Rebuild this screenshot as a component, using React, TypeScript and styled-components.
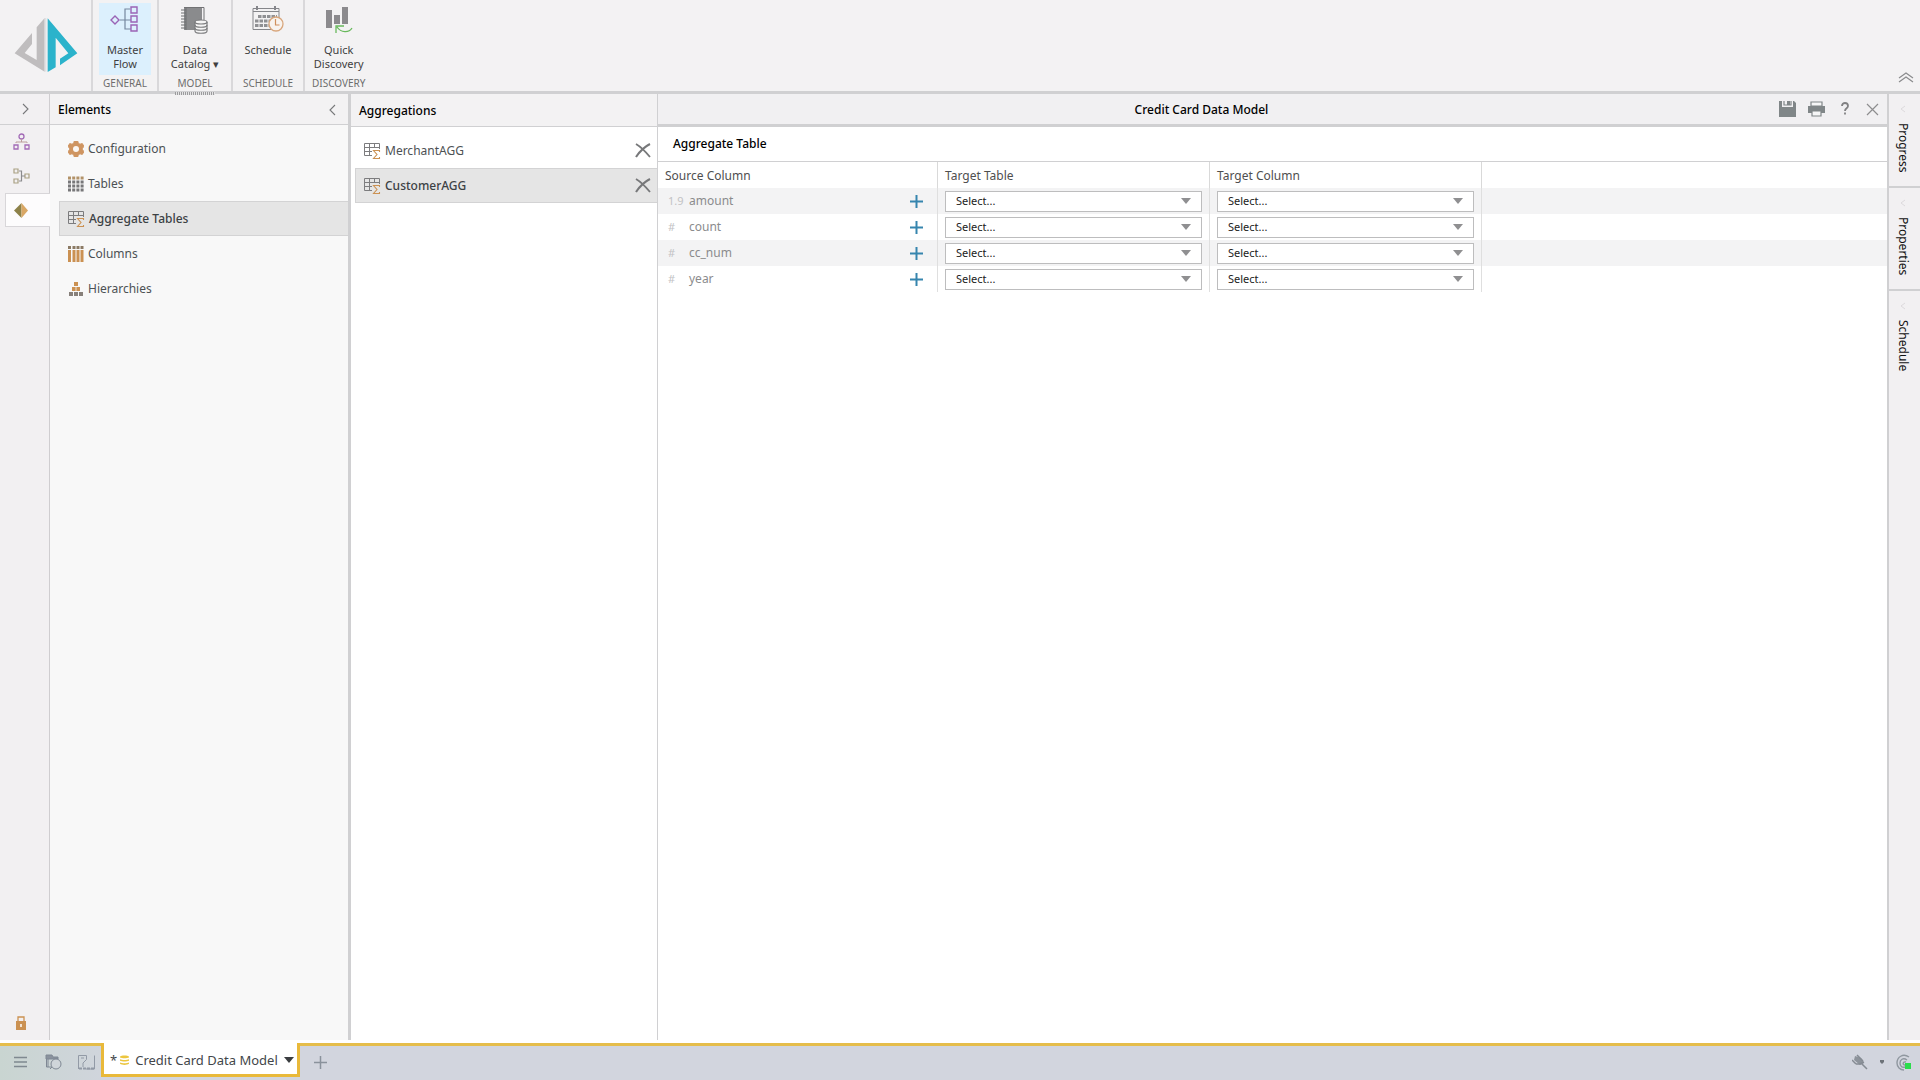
import React from "react";
import styled, { createGlobalStyle, css } from "styled-components";

const line = "#d0d0d2";
const chrome = "#f3f2f3";
const orange = "#cb9152";

const GlobalStyle = createGlobalStyle`
  *, *::before, *::after { box-sizing: border-box; }
  body { margin: 0; background: #fff; color: #222; font: 12px/16px "Noto Sans", "Open Sans", sans-serif; }
  button, select { font: inherit; color: inherit; border: 0; padding: 0; background: none; border-radius: 0; cursor: pointer; }
  h1, h2, ul { margin: 0; padding: 0; font-size: 12px; font-weight: 500; list-style: none; }
  svg { display: block; flex: none; }
`;

const Page = styled.div`
  min-height: 100vh;
  display: grid;
  grid-template-rows: auto 1fr auto;
`;

/* Ribbon */
const Ribbon = styled.header`
  display: flex;
  height: 94px;
  background: ${chrome};
  border-bottom: 3px solid ${line};
`;
const LogoBox = styled.div`
  width: 91px;
  padding: 17px 0 0 14px;
`;
const Group = styled.section<{ $pad: number }>`
  position: relative;
  display: flex;
  flex-direction: column;
  align-items: center;
  justify-content: space-between;
  border-left: 2px solid #d9d8da;
  padding: 3px ${(p) => p.$pad}px 0;
`;
const Grip = styled.span`
  position: absolute;
  left: calc(50% - 20px);
  bottom: -4px;
  width: 40px;
  height: 3px;
  background: repeating-linear-gradient(90deg, #9b9b9d 0 1px, #e4e4e5 1px 2px);
`;
const RibbonButton = styled.button<{ $active?: boolean }>`
  display: flex;
  flex-direction: column;
  align-items: center;
  min-width: 52px;
  height: 72px;
  font-size: 11px;
  line-height: 14px;
  color: #3f3f3f;
  gap: 9px;
  padding-top: 3px;
  background: ${(p) => (p.$active ? "#dcf0fd" : "transparent")};
`;
const GroupLabel = styled.span`
  font-size: 10px;
  line-height: 16px;
  color: #6d6d6d;
  text-transform: uppercase;
`;
const Spacer = styled.div`
  flex: 1;
`;
const RibbonToggle = styled.button`
  align-self: flex-end;
  padding: 0 6px 8px;
`;

/* Work area */
const Work = styled.main`
  display: grid;
  grid-template-columns: 50px 301px 307px minmax(0, 1fr) 31px;
  padding-bottom: 3px;
`;
const Rail = styled.nav`
  display: flex;
  flex-direction: column;
  background: #f2f0f2;
  border-right: 1px solid #cfcdd0;
`;
const RailToggle = styled.button`
  height: 31px;
  display: flex;
  align-items: center;
  justify-content: center;
  border-bottom: 1px solid ${line};
`;
const RailTab = styled.button<{ $active?: boolean }>`
  height: 34px;
  margin: 0 -1px 0 5px;
  display: flex;
  align-items: center;
  padding-left: 8px;
  ${(p) =>
    p.$active &&
    css`
      background: #fdfcfd;
      border: 1px solid #d8d6d9;
      border-right: 0;
    `}
`;
const RailFoot = styled.button`
  margin-top: auto;
  padding: 0 0 10px 15px;
`;
const Panel = styled.section<{ $tint?: boolean }>`
  background: ${(p) => (p.$tint ? "#f8f8f8" : "#fff")};
  border-right: ${(p) => (p.$tint ? "3px" : "1px")} solid ${line};
`;
const PanelHead = styled.div<{ $tall?: boolean }>`
  display: flex;
  align-items: center;
  justify-content: space-between;
  height: ${(p) => (p.$tall ? "33px" : "31px")};
  padding: 2px 11px 0 8px;
  background: ${chrome};
  border-bottom: 1px solid ${line};
  color: #000;
`;
const List = styled.ul<{ $inset: number }>`
  && {
    padding: 6px 0 0 ${(p) => p.$inset}px;
  }
`;
const Row = styled.li<{ $active?: boolean }>`
  display: flex;
  align-items: center;
  height: 35px;
  padding-right: 6px;
  border: 1px solid transparent;
  border-right: 0;
  ${(p) =>
    p.$active &&
    css`
      background: #e5e5e5;
      border-color: #d3d3d4;
    `}
`;
const RowButton = styled.button<{ $active?: boolean }>`
  flex: 1;
  height: 100%;
  display: flex;
  align-items: center;
  gap: 4px;
  padding-left: 8px;
  color: ${(p) => (p.$active ? "#3c4144" : "#4c5154")};
  font-weight: ${(p) => (p.$active ? 500 : 400)};
`;

/* Editor */
const Editor = styled.section`
  border-right: 2px solid ${line};
`;
const EditorHead = styled.div`
  display: flex;
  align-items: center;
  height: 33px;
  background: #f1f0f2;
  border-bottom: 3px solid ${line};
  color: #000;
`;
const Tools = styled.div`
  width: 142px;
  display: flex;
  align-items: center;
  justify-content: flex-end;
  gap: 12px;
  padding-right: 8px;
`;
const HeadTitle = styled.h1`
  flex: 1;
  padding-top: 2px;
  text-align: center;
`;
const Subtitle = styled.h2`
  && {
    padding: 9px 15px;
    border-bottom: 1px solid ${line};
    color: #000;
  }
`;
const Grid = styled.table`
  width: 100%;
  table-layout: fixed;
  border-spacing: 0;
`;
const Col = styled.col<{ $w?: number }>`
  width: ${(p) => (p.$w ? p.$w + "px" : "auto")};
`;
const Th = styled.th`
  height: 26px;
  padding: 2px 7px 0;
  text-align: left;
  font-weight: 400;
  color: #4f4f4f;
  border-right: 1px solid #d9d9d9;
  &:last-child { border-right: 0; }
`;
const Tr = styled.tr`
  &:nth-child(odd) { background: #f3f3f4; }
`;
const Td = styled.td`
  height: 26px;
  padding: 0 7px;
  border-right: 1px solid #dfdfdf;
  &:last-child { border-right: 0; }
`;
const Source = styled.div`
  display: flex;
  align-items: center;
  padding-right: 7px;
  color: #8b8b8d;
`;
const TypeMark = styled.span`
  width: 24px;
  padding-left: 3px;
  font-size: 11px;
  color: #c2c2c4;
`;
const Push = styled.button`
  margin-left: auto;
`;
const Field = styled.label`
  display: grid;
  align-items: center;
  > * { grid-area: 1 / 1; }
  > svg { justify-self: end; margin-right: 11px; pointer-events: none; }
`;
const Select = styled.select`
  appearance: none;
  width: 100%;
  height: 21px;
  padding: 0 10px;
  background: #fff;
  border: 1px solid #bdbdbe;
  font-size: 11px;
  line-height: 18px;
  color: #222;
`;

/* Side tabs */
const Side = styled.nav`
  display: flex;
  flex-direction: column;
  background: #f2f0f2;
`;
const SideTab = styled.button<{ $h: number }>`
  display: flex;
  flex-direction: column;
  align-items: center;
  gap: 10px;
  height: ${(p) => p.$h}px;
  padding: 11px 3px 0 0;
  color: #111;
  border-bottom: 2px solid ${line};
  &:last-child { border-bottom: 0; }
`;
const SideName = styled.span`
  writing-mode: vertical-rl;
`;

/* Bottom bar */
const Dock = styled.footer`
  display: flex;
  height: 37px;
  color: #42464a;
`;
const DockPart = styled.div<{ $grow?: boolean }>`
  display: flex;
  align-items: center;
  gap: ${(p) => (p.$grow ? "12px" : "16px")};
  flex: ${(p) => (p.$grow ? "1" : "none")};
  padding: ${(p) => (p.$grow ? "0 8px 2px 14px" : "0 6px 2px 12px")};
  background: ${(p) => (p.$grow ? "#d2d5de" : "linear-gradient(90deg, #c9d5d1, #d0d5dc)")};
  border-top: 3px solid #e5bd4b;
`;
const TabWrap = styled.div`
  background: #d2d5de;
`;
const DockTab = styled.div`
  display: flex;
  align-items: center;
  height: 34px;
  padding: 2px 3px 0 6px;
  gap: 3px;
  background: #fff;
  border: 3px solid #e9b93a;
  border-top: 0;
  font-size: 13px;
  line-height: 18px;
`;
const TabName = styled.button`
  display: flex;
  align-items: center;
  gap: 6px;
`;

const Logo = () => (
  <svg width="64" height="55" viewBox="42 49 192 165" role="img" aria-label="Logo">
    <path d="M134 52L110 80V178L74 157L96 130V97L44 158L134 213Z" fill="#bfbdbe" />
    <path d="M143 53L232 158L180 194V174L205 158L167 111V200L143 214Z" fill="#2bb3cb" />
    <path d="M134 52h5v161h-5z" fill="#e2e1e3" />
  </svg>
);
const MasterFlowIcon = () => (
  <svg width="30" height="28" viewBox="0 0 30 28" fill="none" stroke="#9a63b5" strokeWidth="1.4">
    <path d="M5 10l4 4-4 4-4-4z" />
    <path d="M10 14h11M20 3h-5v20h6" stroke="#76889f" strokeWidth="1.2" />
    <path d="M21 1h6v6h-6zM21 10h6v6h-6zM21 19h6v6h-6z" />
  </svg>
);
const CatalogIcon = () => (
  <svg width="30" height="28" viewBox="0 0 30 28">
    <path d="M4 2h18v22H4z" fill="#8a8b8d" />
    <path d="M6 2v22M1 4h5M1 7h5M1 10h5M1 13h5M1 16h5M1 19h5M1 22h5" stroke="#6f7072" />
    <path d="M4 1.500h20v13" fill="none" stroke="#717274" />
    <path d="M15 16v9c0 3 12 3 12 0v-9" fill="#f5f5f5" stroke="#7b7c7e" strokeWidth="1.200" />
    <ellipse cx="21" cy="16" rx="6" ry="2" fill="#f5f5f5" stroke="#7b7c7e" strokeWidth="1.200" />
    <path d="M15 19c0 3 12 3 12 0M15 22c0 3 12 3 12 0" fill="none" stroke="#7b7c7e" strokeWidth="1.200" />
  </svg>
);
const ScheduleIcon = () => (
  <svg width="32" height="28" viewBox="0 0 32 28" fill="none">
    <path d="M1 2.500h26v21H1zM1 5.500h26" stroke="#85868a" />
    <path d="M5 0v4M23 0v4" stroke="#85868a" strokeWidth="2" />
    <path d="M6 10.500h19M3 15h19M3 19.500h15" stroke="#8f9093" strokeWidth="3" strokeDasharray="3.500 1" />
    <circle cx="24" cy="18" r="7" fill="#f8f3ee" stroke="#d8a67c" strokeWidth="1.300" />
    <path d="M23.500 13v6h4" stroke="#d08f5c" strokeWidth="1.200" />
  </svg>
);
const DiscoveryIcon = () => (
  <svg width="30" height="28" viewBox="0 0 30 28">
    <path d="M2 4h6v18H2zM10 9h6v9h-6zM18 1h6v17h-6z" fill="#8b8a8d" />
    <path d="M28 22c-3 5-11 5-15-1M20 20h-8v7" fill="none" stroke="#68b95c" strokeWidth="1.300" />
  </svg>
);
const Chevron = ({ left }: { left?: boolean }) => (
  <svg width="8" height="12" viewBox="0 0 8 12" fill="none" stroke="#77787a" strokeWidth="1.100">
    <path d={left ? "M6 1L1 6l5 5" : "M2 1l5 5-5 5"} />
  </svg>
);
const CollapseIcon = () => (
  <svg width="16" height="11" viewBox="0 0 16 11" fill="none" stroke="#8a8b8d" strokeWidth="1.200">
    <path d="M1 6l7-5 7 5M1 10l7-5 7 5" />
  </svg>
);
const TreeIcon = () => (
  <svg width="17" height="18" viewBox="0 0 17 18" fill="none" stroke="#a36bb7" strokeWidth="1.300">
    <circle cx="8.500" cy="3.500" r="2.500" />
    <path d="M1 12h4v4H1zM12 12h4v4h-4z" />
    <path d="M8.500 6v3M3 10V9h11v1" stroke="#bb9e9c" strokeWidth="1" />
  </svg>
);
const JoinIcon = () => (
  <svg width="17" height="16" viewBox="0 0 17 16" fill="none" stroke="#aaa184" strokeWidth="1.200">
    <path d="M1 1h4v4H1zM1 11h4v4H1zM12 6h4v4h-4z" />
    <path d="M6 3h2.500v10H6M9 8h3" stroke="#8b8b8d" />
  </svg>
);
const DiamondIcon = () => (
  <svg width="15" height="15" viewBox="0 0 15 15">
    <path d="M7.500 0v15L0 7.500z" fill="#8d8149" />
    <path d="M7.500 0v15l6.500-7.500z" fill="#d9a765" />
  </svg>
);
const LockIcon = () => (
  <svg width="12" height="14" viewBox="0 0 12 14">
    <path d="M3 6V1h6v5" fill="none" stroke={orange} strokeWidth="1.300" />
    <path d="M1 5h10v9H1z" fill={orange} />
    <path d="M6 8v3" stroke="#fff" strokeWidth="1.500" />
  </svg>
);
const GearIcon = () => (
  <svg width="16" height="16" viewBox="0 0 16 16">
    <path
      d="M6.300 0h3.400l.6 2.300 1.700.9 2.300-.6L16 5.500 14.400 7.200v1.600L16 10.500l-1.700 2.900-2.300-.6-1.700.9-.6 2.300H6.300l-.6-2.300-1.700-.9-2.300.6L0 10.500l1.600-1.700V7.200L0 5.500l1.700-2.900 2.300.6 1.700-.9z"
      fill="#cf9561"
      stroke="#cf9561"
    />
    <circle cx="8" cy="8" r="3" fill="#fbf7f3" />
  </svg>
);
const TablesIcon = () => (
  <svg width="16" height="16" viewBox="0 0 16 16" strokeWidth="3" strokeDasharray="3 1.200">
    <path d="M0 2h16" stroke="#b29268" />
    <path d="M0 6h16M0 10h16M0 14h16" stroke="#777779" />
  </svg>
);
const AggregateIcon = () => (
  <svg width="17" height="16" viewBox="0 0 17 16" fill="none">
    <path d="M.5.500h15V6M.5.500v12H8M.5 4.500h15M.5 8.500H8M5.500.500v12M10.500.500V5" stroke="#7c7c7e" />
    <path d="M15.500 9V7.500h-6l3.500 4-3.500 4h6V14" stroke={orange} strokeWidth="1.100" />
  </svg>
);
const ColumnsIcon = () => (
  <svg width="16" height="16" viewBox="0 0 16 16" strokeWidth="3">
    <path d="M1.500 0v3M6 0v3M10 0v3M14 0v3" stroke="#8b7a64" />
    <path d="M1.500 4v12M6 4v12M10 4v12M14 4v12" stroke={orange} />
  </svg>
);
const HierarchyIcon = () => (
  <svg width="16" height="16" viewBox="0 0 16 16">
    <path d="M6 1h4v4H6zM4 6h3.600v4H4zM8.400 6H12v4H8.400z" fill={orange} />
    <path d="M1 11h4v4H1zM6 11h4v4H6zM11 11h4v4h-4z" fill="#87807a" />
  </svg>
);
const RemoveIcon = () => (
  <svg width="16" height="15" viewBox="0 0 16 15" fill="none" stroke="#77787a">
    <path d="M1 1c5 3 9 7 14 13" strokeWidth="1.800" />
    <path d="M15 1C9 4 5 8 1 14" strokeWidth="2.100" />
  </svg>
);
const PlusIcon = ({ thin }: { thin?: boolean }) => (
  <svg width="13" height="13" viewBox="0 0 13 13" stroke={thin ? "#8a929c" : "#3685ae"} strokeWidth={thin ? 1.5 : 2}>
    <path d="M6.500 0v13M0 6.500h13" />
  </svg>
);
const Caret = ({ dark }: { dark?: boolean }) => (
  <svg width="10" height="6" viewBox="0 0 10 6">
    <path d="M0 0h10L5 6z" fill={dark ? "#3a3d40" : "#8f8f91"} />
  </svg>
);
const SaveIcon = () => (
  <svg width="17" height="16" viewBox="0 0 17 16">
    <path d="M0 0h3v6h11V0h1l2 2v14H0z" fill="#808688" />
    <path d="M5 0v4h7V0" fill="none" stroke="#808688" strokeWidth="1.200" />
    <path d="M8 0h3v4H8z" fill="#808688" />
  </svg>
);
const PrintIcon = () => (
  <svg width="17" height="16" viewBox="0 0 17 16">
    <path d="M0 5h17v7H0z" fill="#808688" />
    <path d="M3 1h11v4H3zM4 10h9v5H4z" fill="#f6f6f7" stroke="#808688" strokeWidth="1.200" />
  </svg>
);
const HelpIcon = () => (
  <svg width="17" height="14" viewBox="0 0 17 14" fill="none" stroke="#818183" strokeWidth="1.800">
    <path d="M5 4c0-4 6-4 6 0 0 2.500-3 2-3 5M8 10.500v2" />
  </svg>
);
const CloseIcon = () => (
  <svg width="13" height="13" viewBox="0 0 13 13" stroke="#8d8d8f" strokeWidth="1.200">
    <path d="M1 1l11 11M12 1L1 12" />
  </svg>
);
const MenuIcon = () => (
  <svg width="17" height="12" viewBox="0 0 17 12" stroke="#7f8990" strokeWidth="1.500">
    <path d="M2 1.500h13M2 6h13M2 10.500h13" />
  </svg>
);
const RecentIcon = () => (
  <svg width="17" height="16" viewBox="0 0 17 16" fill="none" stroke="#7f8894">
    <path d="M1 1h6l1 2h5v2H1z" fill="#8a929d" />
    <path d="M1.500 5v8h5M3 5v8" />
    <circle cx="11" cy="10" r="5" fill="#cfd5da" />
    <path d="M7 13l-2 2" />
  </svg>
);
const LayoutIcon = () => (
  <svg width="17" height="15" viewBox="0 0 17 15" fill="none" stroke="#929aa6">
    <path d="M.5 14V.500h8v4L5 8v4M11 .500M16.500 .500v13.500H8M3 3h3" />
    <path d="M1 13.500h15" strokeDasharray="3 1" strokeWidth="2" />
  </svg>
);
const DatabaseIcon = () => (
  <svg width="9" height="10" viewBox="0 0 9 10" fill="#ecc63f">
    <path d="M0 1.500C1 0 8 0 9 1.500v1C7 3.600 2 3.600 0 2.500zM0 4.200c2 1 7 1 9 0v1.500c-2 1-7 1-9 0zM0 7.400c2 1 7 1 9 0v1.400c-2 1.500-7 1.500-9 0z" />
  </svg>
);
const PinIcon = () => (
  <svg width="16" height="16" viewBox="0 0 16 16">
    <path d="M3 2l6 2 3 5-4 2-6-5z" fill="#8d939b" />
    <path d="M0 6l4 4M4 10h4l4-2M9 9l6 6M5 1l6 6" stroke="#858b93" strokeWidth="1.500" fill="none" />
  </svg>
);
const StatusIcon = () => (
  <svg width="16" height="17" viewBox="0 0 16 17" fill="none" stroke="#8f979f" strokeWidth="1.400">
    <path d="M13 3C7-1 1 3 1 9c0 4 3 7 7 7M11 6c-4-3-7 0-7 3s2 5 5 4M10 8c-3-1-4 3-1 3" />
    <path d="M9 9h6v6H9z" fill="#2bdc4c" stroke="none" />
  </svg>
);
const FaintArrow = () => (
  <svg width="8" height="8" viewBox="0 0 8 8" fill="none" stroke="#dddadd">
    <path d="M6 1L2 4l4 3" />
  </svg>
);

const elements = [
  { name: "Configuration", icon: <GearIcon /> },
  { name: "Tables", icon: <TablesIcon /> },
  { name: "Aggregate Tables", icon: <AggregateIcon />, active: true },
  { name: "Columns", icon: <ColumnsIcon /> },
  { name: "Hierarchies", icon: <HierarchyIcon /> },
];
const aggregations = [{ name: "MerchantAGG" }, { name: "CustomerAGG", active: true }];
const sources = [
  { mark: "1.9", name: "amount" },
  { mark: "#", name: "count" },
  { mark: "#", name: "cc_num" },
  { mark: "#", name: "year" },
];
const sideTabs = [
  { name: "Progress", height: 94 },
  { name: "Properties", height: 103 },
  { name: "Schedule", height: 100 },
];

const Picker = ({ label }: { label: string }) => (
  <Field>
    <Select aria-label={label}>
      <option>Select...</option>
    </Select>
    <Caret />
  </Field>
);

export default function App() {
  return (
    <Page>
      <GlobalStyle />
      <Ribbon>
        <LogoBox>
          <Logo />
        </LogoBox>
        <Group $pad={6}>
          <RibbonButton $active>
            <MasterFlowIcon />
            <span>Master<br />Flow</span>
          </RibbonButton>
          <GroupLabel>General</GroupLabel>
        </Group>
        <Group $pad={10}>
          <RibbonButton>
            <CatalogIcon />
            <span>Data<br />Catalog ▾</span>
          </RibbonButton>
          <GroupLabel>Model</GroupLabel>
          <Grip />
        </Group>
        <Group $pad={9}>
          <RibbonButton>
            <ScheduleIcon />
            <span>Schedule</span>
          </RibbonButton>
          <GroupLabel>Schedule</GroupLabel>
        </Group>
        <Group $pad={7}>
          <RibbonButton>
            <DiscoveryIcon />
            <span>Quick<br />Discovery</span>
          </RibbonButton>
          <GroupLabel>Discovery</GroupLabel>
        </Group>
        <Spacer />
        <RibbonToggle aria-label="Collapse ribbon">
          <CollapseIcon />
        </RibbonToggle>
      </Ribbon>

      <Work>
        <Rail>
          <RailToggle aria-label="Expand">
            <Chevron />
          </RailToggle>
          <RailTab aria-label="Flow"><TreeIcon /></RailTab>
          <RailTab aria-label="Joins"><JoinIcon /></RailTab>
          <RailTab aria-label="Model" $active><DiamondIcon /></RailTab>
          <RailFoot aria-label="Lock"><LockIcon /></RailFoot>
        </Rail>

        <Panel $tint>
          <PanelHead>
            <h2>Elements</h2>
            <button aria-label="Collapse"><Chevron left /></button>
          </PanelHead>
          <List $inset={9}>
            {elements.map((e) => (
              <Row key={e.name} $active={e.active}>
                <RowButton $active={e.active}>
                  {e.icon}
                  {e.name}
                </RowButton>
              </Row>
            ))}
          </List>
        </Panel>

        <Panel>
          <PanelHead $tall>
            <h2>Aggregations</h2>
          </PanelHead>
          <List $inset={4}>
            {aggregations.map((a) => (
              <Row key={a.name} $active={a.active}>
                <RowButton $active={a.active}>
                  <AggregateIcon />
                  {a.name}
                </RowButton>
                <button aria-label={"Remove " + a.name}><RemoveIcon /></button>
              </Row>
            ))}
          </List>
        </Panel>

        <Editor>
          <EditorHead>
            <HeadTitle>Credit Card Data Model</HeadTitle>
            <Tools>
              <button aria-label="Save"><SaveIcon /></button>
              <button aria-label="Print"><PrintIcon /></button>
              <button aria-label="Help"><HelpIcon /></button>
              <button aria-label="Close"><CloseIcon /></button>
            </Tools>
          </EditorHead>
          <Subtitle>Aggregate Table</Subtitle>
          <Grid>
            <colgroup>
              <Col $w={280} />
              <Col $w={272} />
              <Col $w={272} />
              <Col />
            </colgroup>
            <thead>
              <tr>
                <Th>Source Column</Th>
                <Th>Target Table</Th>
                <Th>Target Column</Th>
                <Th as="td" />
              </tr>
            </thead>
            <tbody>
              {sources.map((s) => (
                <Tr key={s.name}>
                  <Td>
                    <Source>
                      <TypeMark>{s.mark}</TypeMark>
                      {s.name}
                      <Push aria-label={"Add " + s.name}><PlusIcon /></Push>
                    </Source>
                  </Td>
                  <Td><Picker label={"Target table for " + s.name} /></Td>
                  <Td><Picker label={"Target column for " + s.name} /></Td>
                  <Td />
                </Tr>
              ))}
            </tbody>
          </Grid>
        </Editor>

        <Side>
          {sideTabs.map((t) => (
            <SideTab key={t.name} $h={t.height}>
              <FaintArrow />
              <SideName>{t.name}</SideName>
            </SideTab>
          ))}
        </Side>
      </Work>

      <Dock>
        <DockPart>
          <button aria-label="Menu"><MenuIcon /></button>
          <button aria-label="Recent"><RecentIcon /></button>
          <button aria-label="Layout"><LayoutIcon /></button>
        </DockPart>
        <TabWrap>
          <DockTab>
            <span>*</span>
            <TabName>
              <DatabaseIcon />
              Credit Card Data Model
              <Caret dark />
            </TabName>
          </DockTab>
        </TabWrap>
        <DockPart $grow>
          <button aria-label="New tab"><PlusIcon thin /></button>
          <Spacer />
          <button aria-label="Pin"><PinIcon /></button>
          <button aria-label="Pin options">
            <svg width="4" height="4" viewBox="0 0 4 4"><path d="M0 0h4v2L2 4 0 2z" fill="#6d7379" /></svg>
          </button>
          <button aria-label="Status"><StatusIcon /></button>
        </DockPart>
      </Dock>
    </Page>
  );
}
